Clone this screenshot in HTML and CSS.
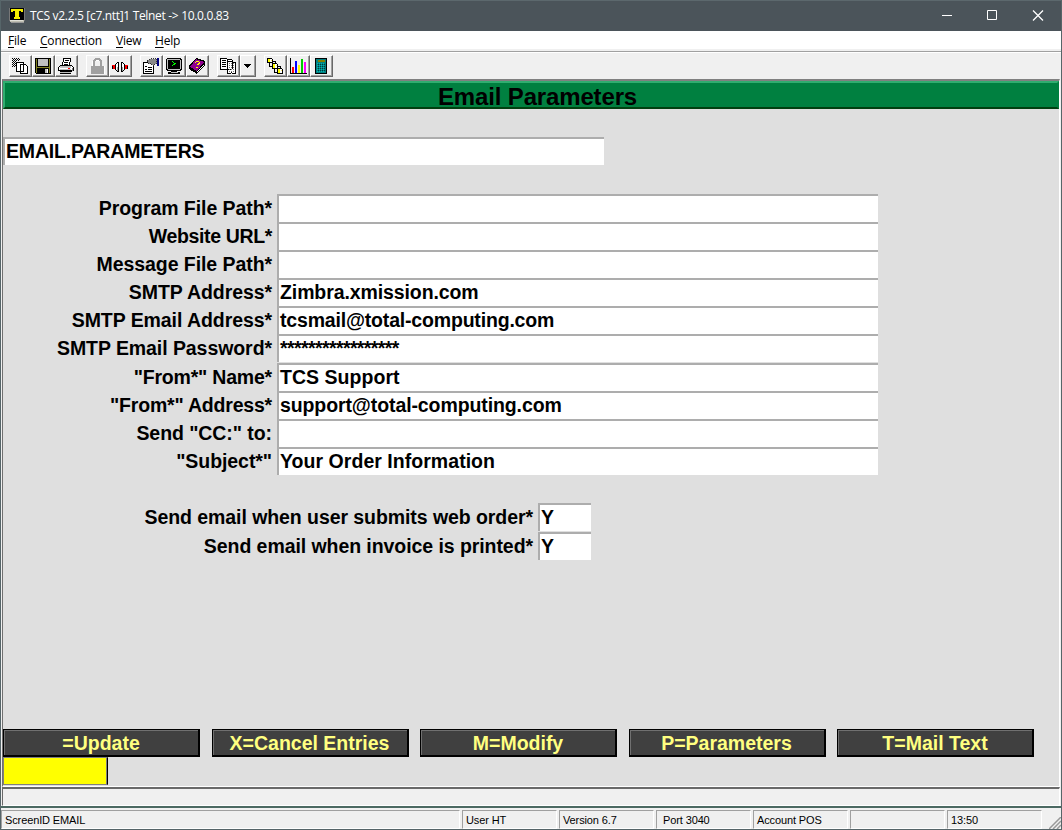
FILE: index.html
```html
<!DOCTYPE html>
<html lang="en">
<head>
<meta charset="utf-8">
<title>TCS v2.2.5 [c7.ntt]1 Telnet -&gt; 10.0.0.83</title>
<link rel="stylesheet" href="styles.css">
</head>
<body>
<div class="window">
  <header class="titlebar">
    <svg class="app-icon" width="16" height="16" viewBox="0 0 16 16"><path fill="#bdbdb0" d="M1 11h14v3H1z"/><path fill="#777" d="M0 0h1v13H0zM15 0h1v13h-1z"/><path d="M1 0h14v12H1z"/><path fill="#f6f000" d="M2 1h12v3h-2V3h-2v6h1v2H5V9h1V3H4v1H2z"/><path fill="#e0e0d8" d="M1 12h13v1H1z"/><path fill="#999" d="M2 14h13v1H2z"/></svg>
    <span class="caption">TCS v2.2.5 [c7.ntt]1 Telnet -&gt; 10.0.0.83</span>
    <svg class="controls" width="112" height="12" viewBox="0 0 112 12" fill="none" stroke="#fff"><path d="M4 5.500h10M49.500 .5h9v9h-9z"/><path stroke-width="1.300" d="M95 .5l10 10M105 .5l-10 10"/></svg>
  </header>
  <nav class="menu"><span class="m1"><u>F</u>ile</span><span class="m2"><u>C</u>onnection</span><span class="m3"><u>V</u>iew</span><span class="m4"><u>H</u>elp</span></nav>
  <div class="toolbar">
    <div class="group">
      <span class="tool"><svg viewBox="0 0 16 16"><path stroke="#000" stroke-dasharray="1 1" d="M0 .5h8M1 1.500h8M0 2.500h8M1 3.500h4M0 4.500h4M1 5.500h4M0 6.500h4M1 7.500h4M0 8.500h4"/><path fill="#fff" stroke="#000" d="M4.500 4.500h7v9h-7zM8.500 6.500h5l2 2v7h-7z"/></svg></span>
      <span class="tool"><svg viewBox="0 0 16 16"><path d="M0 0h16v16H1L0 15z"/><path fill="#808020" d="M1 1h1v14H1zM14 1h1v14h-1zM2 9h12v1H2z"/><path fill="#c0c0c0" d="M3 1h10v7H3zM10 11h3v4h-3z"/><path fill="#fff" d="M12 11h1v4h-1z"/></svg></span>
      <span class="tool"><svg viewBox="0 0 16 16"><path fill="#fff" stroke="#000" d="M4.500 7.500l1-7h7l-1 7M2.500 7.500h11l2 2v3h-15v-3z"/><path stroke="#000" d="M7 2.500h4M6 4.500h4M6 6.500h4M2 13.500h12M2 15.500h11"/><path fill="#c0c0c0" d="M2 8h11v2H2zM2 11h11v1H2zM2 14h11v1H2z"/><path fill="#808080" d="M14 10h1v3h-1z"/><path fill="red" d="M10 10h2v1h-2z"/></svg></span>
    </div>
    <div class="group g2">
      <span class="tool"><svg viewBox="0 0 16 16"><path fill="#a0a0a0" d="M2 8h2V3l2-3h5l2 3v5h2v8H2zM6 8h5V3L9 2H7L6 3z" fill-rule="evenodd"/><path fill="#fff" d="M3 8V3h1v5zM7 2h3v1H7zM15 8h1v8h-1z"/></svg></span>
      <span class="tool"><svg viewBox="0 0 16 16"><path fill="red" d="M0 7h3v4H0zM13 7h3v4h-3z"/><path d="M0 8h1v3H0zM15 8h1v3h-1z"/><path fill="#fff" stroke="#000" d="M6.500 4.500h-1l-2 2v5l2 2h1zM9.500 4.500h1l2 2v5l-2 2h-1z"/><path fill="#a0a0a0" d="M5 9h1v4H5zM10 9h1v4h-1z"/></svg></span>
    </div>
    <div class="group g3">
      <span class="tool"><svg viewBox="0 0 16 16"><path fill="#fff" stroke="#000" d="M.5 4.500h10v11H.5z"/><path stroke="#000" d="M2 8.500h2M5 9.500h4M2 11.500h2M5 11.500h4M2 13.500h7"/><path fill="#888" stroke="#333" stroke-dasharray="1 1" d="M4.500 2.500l3-2h6v5l-4 2-1-2h-3z"/><path fill="#000080" d="M14 0h2v8h-2z"/></svg></span>
      <span class="tool"><svg viewBox="0 0 16 16"><path d="M1 0h13l2 2v9l-2 2h-3v1h3v2H2v-2h3v-1H1l-1-2V2z"/><path fill="#c0c0c0" d="M1 1h13v1H1zM1 2h1v9H1zM14 2h1v9h-1zM2 11h12v1H2zM5 14h7v1H5z"/><path d="M3 2h10v8H3z"/><path fill="none" stroke="#0f0" d="M6 3.500h1M7 4.500h1M8 5.500h2M7 6.500h2M6 7.500h1"/></svg></span>
      <span class="tool"><svg viewBox="0 0 16 16"><path d="M7 0l9 3v4L8 16 0 11V8z"/><path fill="#900090" d="M7 1l8 3-7 9-7-4z"/><path fill="#fff" d="M8 14l7-8v1l-7 8z"/><path fill="none" stroke="#ff0" d="M6 4.500h1M7 3.500h3M10 4.500h1M9 5.500h2M8 6.500h2M7 9.500h2"/></svg></span>
    </div>
    <div class="group g4">
      <span class="tool"><svg class="wide" viewBox="0 0 17 16"><path fill="#fff" stroke="#000" d="M.5.500h6l1 1h4l1 1v8l-1 1h-11zM7.500 4.500l1-1 7 1v11h-3l-1-1-1 1h-3z"/><path stroke="#000" d="M2 2.500h4M2 4.500h4M2 6.500h4M2 8.500h4M7.500 1v12"/><path stroke="#777" stroke-dasharray="1 1" d="M9 5.500h6M9 7.500h6M9 9.500h6M9 11.500h6M9 13.500h5"/></svg></span>
      <span class="tool arrow"><svg viewBox="0 0 7 4"><path d="M0 0h7v1H6v1H5v1H4v1H3V3H2V2H1V1H0z"/></svg></span>
    </div>
    <div class="group g5">
      <span class="tool"><svg viewBox="0 0 16 16"><path fill="#fff" stroke="#000" d="M.5.500h4l1 1v3h-5zM5.500 5.500h4l1 1v4h-5zM10.500 10.500h4l1 1v4h-5z"/><path fill="#ff0" d="M1 1h2v3H1zM6 6h2v4H6zM11 11h2v4h-2z"/><path fill="#ffe85a" d="M4 2h1v1H4zM9 7h1v1H9zM14 12h1v1h-1z"/><path fill="none" stroke="#000" d="M2.500 5v3h3M7.500 11v3h3M6 3.500h2v2M11 8.500h2v2"/></svg></span>
      <span class="tool"><svg class="wide" viewBox="0 0 17 16"><path d="M0 0h1v15h16v1H0z"/><path fill="red" d="M2 9h2v6H2z"/><path fill="#00f" d="M5 3h2v12H5z"/><path fill="#ff0" d="M8 7h2v8H8z"/><path fill="#0c0" d="M11 1h2v14h-2z"/><path fill="#f0f" d="M14 4h2v11h-2z"/></svg></span>
      <span class="tool"><svg viewBox="0 0 16 16"><path d="M2 0h12v16H2z"/><path fill="teal" d="M3 1h10v14H3z"/><path fill="#808000" d="M5 2h7v2H5z"/><path stroke="#003c3c" stroke-dasharray="1 1" d="M5 6.500h7M5 8.500h7M5 10.500h7M5 12.500h7"/><path stroke="#00b4b4" stroke-dasharray="1 1" d="M4 5.500h8M4 7.500h8M4 9.500h8M4 11.500h8M4 13.500h8"/></svg></span>
    </div>
  </div>
  <main class="screen">
    <h1 class="banner">Email Parameters</h1>
    <div class="field record">EMAIL.PARAMETERS</div>
    <div class="form">
      <div class="row"><label>Program File Path*</label><div class="field"></div></div>
      <div class="row"><label class="condensed">Website URL*</label><div class="field"></div></div>
      <div class="row"><label>Message File Path*</label><div class="field"></div></div>
      <div class="row"><label>SMTP Address*</label><div class="field">Zimbra.xmission.com</div></div>
      <div class="row"><label>SMTP Email Address*</label><div class="field email">tcsmail@total-computing.com</div></div>
      <div class="row tall"><label>SMTP Email Password*</label><div class="field secret">*****************</div></div>
      <div class="row"><label class="quoted">"From*" Name*</label><div class="field name">TCS Support</div></div>
      <div class="row"><label class="quoted">"From*" Address*</label><div class="field">support@total-computing.com</div></div>
      <div class="row"><label>Send "CC:" to:</label><div class="field"></div></div>
      <div class="row"><label>"Subject*"</label><div class="field name">Your Order Information</div></div>
    </div>
    <div class="form flags">
      <div class="row tall"><label>Send email when user submits web order*</label><div class="field">Y</div></div>
      <div class="row"><label>Send email when invoice is printed*</label><div class="field">Y</div></div>
    </div>
    <div class="actions">
      <div class="action">=Update</div><div class="action">X=Cancel Entries</div><div class="action">M=Modify</div><div class="action">P=Parameters</div><div class="action">T=Mail Text</div>
    </div>
    <div class="prompt"></div>
  </main>
  <div class="message"></div>
  <footer class="status">
    <span>ScreenID EMAIL</span><span>User HT</span><span>Version 6.7</span><span class="port">Port 3040</span><span>Account POS</span><span></span><span>13:50</span>
    <svg class="grip" width="12" height="12" viewBox="0 0 12 12"><path stroke="#999" stroke-width="1.500" d="M0 12L12 0M4 12l8-8M8 12l4-4"/></svg>
  </footer>
</div>
</body>
</html>
```
FILE: styles.css
```css
* { box-sizing: border-box; }
body { margin: 0; background: #f0f0f0; color: #000; font-family: "Liberation Sans", Arial, sans-serif; }
.window { width: 1062px; height: 830px; display: flex; flex-direction: column; overflow: hidden; border: solid #566569; border-width: 0 1px 1px; }
.titlebar { height: 31px; flex: none; margin: 0 -1px; background: #4b545a; border-top: 1px solid #5c686d; display: flex; align-items: center; padding: 0 12px 0 9px; color: #fff; font: 12px/30px "Open Sans", "Noto Sans", sans-serif; }
.app-icon { margin-bottom: 1px; shape-rendering: crispEdges; }
.caption { margin-left: 5px; flex: 1; white-space: nowrap; letter-spacing: -0.32px; }
.controls { display: block; }
.menu { height: 18px; flex: none; background: #fff; display: flex; padding-left: 7px; font: 12px/20px "Open Sans", "Noto Sans", sans-serif; letter-spacing: -0.2px; }
.menu span { white-space: nowrap; }
.m1 { width: 32px; }
.m2 { width: 76px; }
.m3 { width: 39px; }
.menu u { text-underline-offset: 2px; }
.toolbar { height: 28px; flex: none; margin-top: 2px; border-top: 1px solid #a0a0a0; box-shadow: inset 0 1px #fff; display: flex; align-items: flex-start; padding: 3px 0 0 8px; }
.group { display: flex; }
.g2, .g3, .g4, .g5 { margin-left: 8px; }
.tool { width: 23px; height: 22px; display: flex; align-items: center; justify-content: center; padding-right: 1px; border: 1px solid; border-color: #fff #696969 #696969 #fff; box-shadow: inset -1px -1px #a0a0a0; }
.tool svg { width: 16px; height: 16px; flex: none; shape-rendering: crispEdges; }
.tool svg.wide { width: 17px; }
.tool.arrow { width: 16px; }
.tool.arrow svg { width: 7px; height: 4px; }
.screen { height: 708px; flex: none; margin: 0 1px; background: #dfdfdf; border: solid; border-width: 2px 1px 1px; border-color: #808080 #fff #fff #707070; display: flex; flex-direction: column; align-items: flex-start; font-weight: bold; font-size: 19.5px; }
.banner { width: 100%; height: 28px; margin: 0 0 28px; background: #008040; border: 2px solid #30ad70; border-color: #30ad70 #008040 #004010 #30ad70; font-size: 24px; line-height: 27px; letter-spacing: -0.15px; text-align: center; padding-left: 13px; }
.field { width: 601px; height: 28px; background: #fff; line-height: 25px; white-space: nowrap; position: relative; padding: 2px 0 0 3px; letter-spacing: -0.1px; }
.field::before { content: ""; position: absolute; left: 0; top: 0; width: calc(100% - 2px); height: 26px; border: solid #adadad; border-width: 2px 0 0 2px; }
.record { letter-spacing: -0.17px; margin-bottom: 29px; }
.row { display: flex; height: 28px; }
.row label { width: 269px; margin-right: 5px; text-align: right; line-height: 29px; white-space: nowrap; letter-spacing: -0.07px; }
.row .condensed { letter-spacing: -0.35px; }
.row .quoted { letter-spacing: -0.2px; }
.email { letter-spacing: -0.18px; }
.name { letter-spacing: 0.04px; }
.tall { height: 29px; }
.secret { letter-spacing: -0.6px; }
.flags { margin-top: 28px; }
.row .name { padding-left: 3px; }
.flags .row label { width: 530px; }
.flags .field { width: 53px; }
.actions { display: flex; gap: 11.5px; margin-top: 169px; }
.action { width: 197px; height: 28px; background: #404040; border: solid #000; border-width: 1px 2px 2px 1px; box-shadow: inset 1px 1px #707070; color: #ffff80; text-align: center; line-height: 27px; }
.prompt { width: 105px; height: 28px; background: #ff0; border: 1px solid #808080; border-right-color: #000; box-shadow: inset -1px 0 #808080; }
.message { height: 19px; flex: none; margin: 0 1px; border: solid; border-width: 2px 1px 1px; border-color: #696969 #fff #fff #696969; }
.status { height: 23px; flex: none; border-top: 2px solid #4b6962; display: flex; gap: 2px; padding-top: 2px; font-size: 11px; line-height: 18px; letter-spacing: -0.12px; }
.status span { width: 95px; height: 19px; padding-left: 3px; border: 1px solid; border-color: #a0a0a0 #fff #fff #a0a0a0; white-space: nowrap; }
.status span:first-child { width: 459px; }
.status .port { padding-left: 6px; }
.grip { align-self: flex-end; margin-left: auto; }
```
